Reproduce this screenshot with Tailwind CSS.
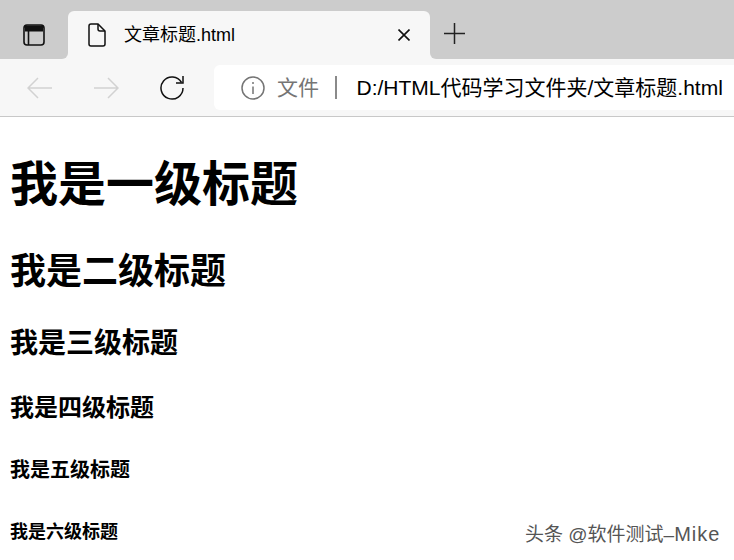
<!DOCTYPE html>
<html lang="zh">
<head>
    <meta charset="UTF-8">
    <title>文章标题.html</title>
    <script src="https://cdn.jsdelivr.net/npm/@tailwindcss/browser@4"></script>
</head>
<body class="relative w-[734px] h-[560px] overflow-hidden bg-white font-['Liberation_Sans','Noto_Sans_CJK_SC',sans-serif]">
    <!-- Tab strip -->
    <div class="flex h-[59px] bg-[#cccccc] pt-[11px]">
        <div class="w-[68px] flex justify-center items-center pb-[1px]">
            <svg width="22" height="22" viewBox="0 0 22 22" fill="none" stroke="#111" stroke-width="1.6">
                <rect x="1" y="1" width="20" height="20" rx="3"/>
                <path d="M2 4.5h18" stroke-width="6"/>
                <path d="M5.5 7v14"/>
            </svg>
        </div>
        <div class="relative w-[362px] h-[48px] bg-[#f7f7f7] rounded-t-[6px] flex items-center">
            <div class="absolute left-[-6px] bottom-0 w-[6px] h-[6px] bg-[#f7f7f7]"><div class="w-full h-full bg-[#cccccc] rounded-br-[6px]"></div></div>
            <div class="absolute right-[-6px] bottom-0 w-[6px] h-[6px] bg-[#f7f7f7]"><div class="w-full h-full bg-[#cccccc] rounded-bl-[6px]"></div></div>
            <svg class="ml-[19px] mr-[17px]" width="20" height="24" viewBox="0 0 20 24" fill="none" stroke="#111" stroke-width="1.5">
                <path d="M4 1h7l7 7v13a2 2 0 0 1-2 2H4a2 2 0 0 1-2-2V3a2 2 0 0 1 2-2z"/>
                <path d="M11 1v5a2 2 0 0 0 2 2h5"/>
            </svg>
            <span class="text-[18px] text-black">文章标题.html</span>
            <svg class="ml-auto mr-[20px]" width="12" height="12" viewBox="0 0 12 12" stroke="#111" stroke-width="1.6">
                <path d="M0.5 0.5l11 11M11.5 0.5l-11 11"/>
            </svg>
        </div>
        <div class="flex items-center pl-[14px] pb-[3px]">
            <svg width="21" height="21" viewBox="0 0 21 21" stroke="#222" stroke-width="1.5">
                <path d="M10.5 0v21M0 10.5h21"/>
            </svg>
        </div>
    </div>

    <!-- Toolbar -->
    <div class="flex items-center h-[58px] bg-[#f7f7f7] border-b border-[#c8c8c8]">
        <svg class="ml-[27px]" width="26" height="22" viewBox="0 0 26 22" fill="none" stroke="#d2d2d2" stroke-width="1.5">
            <path d="M25 11H1M11 1L1 11l10 10"/>
        </svg>
        <svg class="ml-[40px]" width="26" height="22" viewBox="0 0 26 22" fill="none" stroke="#d2d2d2" stroke-width="1.5">
            <path d="M1 11h24M15 1l10 10-10 10"/>
        </svg>
        <svg class="ml-[40px]" width="26" height="26" viewBox="0 0 26 26" fill="none" stroke="#111" stroke-width="1.5">
            <path d="M22.5 7.5A11 11 0 1 0 24 13"/>
            <path d="M24 1v7h-7"/>
        </svg>
        <div class="ml-[29px] flex-1 h-[45px] bg-white rounded-l-[6px] flex items-center whitespace-nowrap overflow-hidden">
            <svg class="ml-[27px]" width="24" height="24" viewBox="0 0 24 24" fill="none" stroke="#757575" stroke-width="1.5">
                <circle cx="12" cy="12" r="11"/>
                <path d="M12 10.5v7.5M12 6v2"/>
            </svg>
            <span class="ml-[12px] text-[21px] text-[#757575]">文件</span>
            <div class="ml-[16px] w-[1.5px] h-[23px] bg-[#8a8a8a]"></div>
            <span class="ml-[20px] text-[21px] text-black">D:/HTML代码学习文件夹/文章标题.html</span>
        </div>
    </div>

    <!-- Page -->
    <div class="px-[10px] font-bold text-black">
        <h1 class="text-[48px] leading-[68px] mt-[34px]">我是一级标题</h1>
        <h2 class="text-[36px] leading-[50px] mt-[28px]">我是二级标题</h2>
        <h3 class="text-[28px] leading-[40px] mt-[27px]">我是三级标题</h3>
        <h4 class="text-[24px] leading-[34px] mt-[27px]">我是四级标题</h4>
        <h5 class="text-[20px] leading-[28px] mt-[31px]">我是五级标题</h5>
        <h6 class="text-[18px] leading-[26px] mt-[35px]">我是六级标题</h6>
    </div>

    <!-- Watermark over the page -->
    <div class="absolute left-[525px] top-[521px] text-[19px] leading-[26px] text-[#555] whitespace-nowrap">头条 @软件测试–<span class="text-[20px] tracking-[1px]">Mike</span></div>
</body>
</html>
